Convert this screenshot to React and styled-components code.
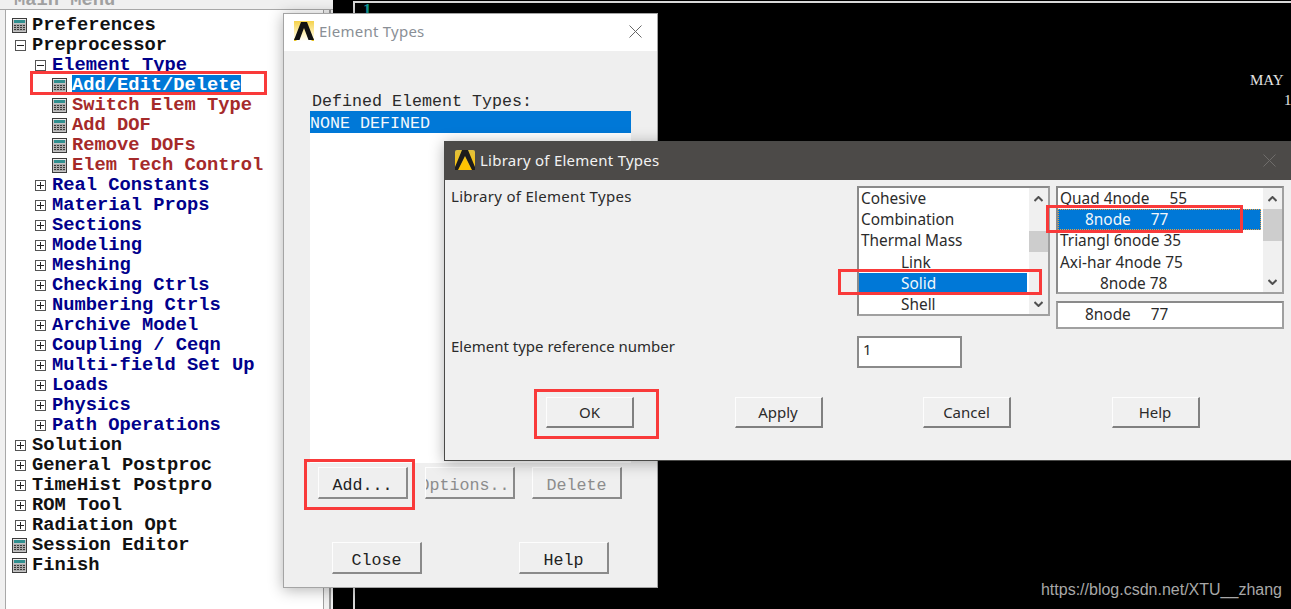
import React from "react";
import styled, { createGlobalStyle } from "styled-components";

const Global = createGlobalStyle`
  html, body { margin: 0; padding: 0; background: #000; }
`;

const MONO = `"Liberation Mono", "DejaVu Sans Mono", monospace`;
const UI = `"Noto Sans", "Open Sans", sans-serif`;

const Desktop = styled.div`
  position: relative;
  width: 1291px;
  height: 609px;
  overflow: hidden;
  display: flex;
  background: #000;
`;

const MenuPanel = styled.aside`
  width: 333px;
  height: 609px;
  flex: none;
  background: #f0f0f0;
  display: flex;
  flex-direction: column;
`;

const MenuCaption = styled.div`
  height: 9px;
  flex: none;
  overflow: hidden;
  padding-left: 14px;
  font: bold 18.75px/0 ${MONO};
  color: #a0a0a0;
  border-bottom: 1px solid #a8a8a8;
`;

const MenuBody = styled.div`
  flex: 1;
  display: flex;
  padding-left: 5px;
`;

const TreeBox = styled.div`
  width: 317px;
  flex: none;
  background: #fff;
  border-left: 1px solid #a8a8a8;
  border-right: 1px solid #a0a0a0;
  padding-top: 5px;
`;

const ScrollEdge = styled.div`
  width: 5px;
  flex: none;
  border-right: 2px solid #999;
`;

const TreeRow = styled.div`
  position: relative;
  height: 20px;
  display: flex;
  align-items: center;
  padding-left: ${(p) => 5 + p.$depth * 20}px;
  box-sizing: border-box;
`;

const TreeSlot = styled.span`
  width: 21px;
  height: 20px;
  flex: none;
  display: flex;
  align-items: center;
  padding-left: ${(p) => (p.$box ? 4 : 1)}px;
  box-sizing: border-box;
`;

const TreeLabel = styled.span`
  font: bold 18.75px/20px ${MONO};
  white-space: pre;
  color: ${(p) => p.$color};
  background: ${(p) => (p.$selected ? "#0078d7" : "transparent")};
  height: 20px;
`;

const GraphicsArea = styled.main`
  flex: 1;
  position: relative;
  padding: 1px 0 0 20px;
`;

const GraphicsFrame = styled.div`
  height: 100%;
  box-sizing: border-box;
  border-top: 2px solid #d8d8d8;
  border-left: 2px solid #d8d8d8;
  padding: 0 0 0 8px;
  display: flex;
  flex-direction: column;
`;

const AxisNumber = styled.div`
  font: bold 17px/14px "Liberation Serif", serif;
  color: #109a9a;
`;

const PlotNote = styled.div`
  position: absolute;
  font: 15px/16px "Liberation Serif", serif;
  color: #e4e4e4;
  left: ${(p) => p.$x}px;
  top: ${(p) => p.$y}px;
`;

const Window = styled.section`
  position: absolute;
  left: ${(p) => p.$x}px;
  top: ${(p) => p.$y}px;
  width: ${(p) => p.$w}px;
  height: ${(p) => p.$h}px;
  box-sizing: border-box;
  display: flex;
  flex-direction: column;
  background: #efefef;
  box-shadow: 0 2px 14px rgba(0, 0, 0, 0.3);
`;

const ElementWindow = styled(Window)`
  border: 1px solid #a4a4a4;
`;

const LibraryWindow = styled(Window)`
  border: 1px solid #4a4a48;
  border-right: 0;
`;

const TitleBar = styled.header`
  height: ${(p) => p.$h}px;
  box-sizing: border-box;
  flex: none;
  display: flex;
  align-items: center;
  gap: 5px;
  padding: 0 15px ${(p) => p.$lift}px 10px;
  background: ${(p) => p.$bg};
  color: ${(p) => p.$color};
  font: 15px/20px ${UI};
  letter-spacing: 0.25px;
`;

const TitleText = styled.span`
  flex: 1;
`;

const ElementBody = styled.div`
  flex: 1;
  padding: 42px 0 0 26px;
  display: flex;
  flex-direction: column;
`;

const DefinedLabel = styled.div`
  font: 16.67px/18px ${MONO};
  color: #2a2a2a;
  padding-left: 2px;
`;

const DefinedList = styled.div`
  width: 321px;
  height: 352px;
  flex: none;
  background: #fff;
`;

const DefinedItem = styled.div`
  height: 22px;
  background: #0078d7;
  color: #f4f8fc;
  font: 16.67px/26px ${MONO};
`;

const ActionRow = styled.div`
  display: flex;
  gap: 17px;
  margin: ${(p) => p.$top}px 0 0 ${(p) => p.$left}px;
`;

const CloseRow = styled(ActionRow)`
  gap: 97px;
`;

const BevelButton = styled.button`
  width: 90px;
  height: 32px;
  padding: 6px 0 0;
  box-sizing: border-box;
  display: flex;
  align-items: center;
  justify-content: center;
  overflow: hidden;
  white-space: pre;
  flex: none;
  background: #efefef;
  border-style: solid;
  border-width: 1px 2px 2px 1px;
  border-color: #fdfdfd #8a8a8a #8a8a8a #fdfdfd;
  color: ${(p) => (p.disabled ? "#8c8c8c" : "#222")};
  font: 16.67px/20px ${MONO};
`;

const LibraryBody = styled.div`
  flex: 1;
  display: flex;
  flex-direction: column;
  background: #f0f0f0;
  padding: 6px 0 0 6px;
`;

const LibraryGrid = styled.div`
  display: grid;
  grid-template-columns: 406px 199px 228px;
  grid-template-rows: 150px 32px;
  font: 15px/21px ${UI};
  color: #2b2b2b;
`;

const FieldLabel = styled.div`
  letter-spacing: ${(p) => p.$track}px;
`;

const ListBox = styled.div`
  width: ${(p) => p.$w}px;
  height: ${(p) => p.$h}px;
  box-sizing: border-box;
  border: 2px solid #8a8a8a;
  border-right-color: #a0a0a0;
  border-bottom-color: #a0a0a0;
  background: #fff;
  display: flex;
`;

const ListRows = styled.div`
  flex: 1;
  min-width: 0;
  overflow: hidden;
  padding-right: 2px;
  font-size: 15.4px;
`;

const ListRow = styled.div`
  height: 21.2px;
  box-sizing: border-box;
  white-space: pre;
  line-height: 21px;
  padding-left: ${(p) => p.$indent}px;
  background: ${(p) => (p.$selected ? "#0078d7" : "transparent")};
  color: ${(p) => (p.$selected ? "#f2f7fb" : "inherit")};
  outline: ${(p) => (p.$focus ? "1px dotted #e8a040" : "none")};
  outline-offset: -1px;
`;

const ScrollBar = styled.div`
  width: 19px;
  flex: none;
  background: #f0f0f0;
  display: flex;
  flex-direction: column;
  align-items: stretch;
`;

const ScrollArrow = styled.div`
  height: 21px;
  flex: none;
  display: flex;
  align-items: center;
  justify-content: center;
`;

const ScrollTrack = styled.div`
  flex: 1;
  padding-top: ${(p) => p.$offset}px;
`;

const ScrollThumb = styled.div`
  height: ${(p) => p.$h}px;
  background: #cdcdcd;
`;

const RightStack = styled.div`
  display: flex;
  flex-direction: column;
  gap: 7px;
`;

const ReadoutBox = styled.div`
  width: 228px;
  height: 28px;
  box-sizing: border-box;
  background: #fff;
  border: 2px solid #a0a0a0;
  border-top-color: #8a8a8a;
  padding-left: 27px;
  font-size: 15.4px;
  line-height: 23px;
  white-space: pre;
`;

const NumberBox = styled.div`
  width: 105px;
  height: 32px;
  box-sizing: border-box;
  background: #fff;
  border: 2px solid #8a8a8a;
  padding-left: 4px;
  line-height: 23px;
`;

const DialogButtons = styled.div`
  display: flex;
  gap: 100.5px;
  margin: 29px 0 0 95px;
`;

const DialogButton = styled.button`
  width: 88px;
  height: 31px;
  padding: 0 0 1px;
  box-sizing: border-box;
  flex: none;
  background: #f0f0f0;
  border-style: solid;
  border-width: 1px 2px 2px 1px;
  border-color: #fdfdfd #808080 #808080 #fdfdfd;
  color: #2b2b2b;
  font: 15px/20px ${UI};
`;

const Callout = styled.div`
  position: absolute;
  left: ${(p) => p.$x}px;
  top: ${(p) => p.$y}px;
  width: ${(p) => p.$w}px;
  height: ${(p) => p.$h}px;
  box-sizing: border-box;
  border: 3px solid #f93a3a;
  pointer-events: none;
`;

const Watermark = styled.div`
  position: absolute;
  right: 9px;
  bottom: 9px;
  font: 16px/20px "Liberation Sans", sans-serif;
  color: #a8a8a8;
`;

const CalcIcon = () => (
  <svg width="15" height="15" viewBox="0 0 15 15" style={{ display: "block" }}>
    <rect x="0.5" y="0.5" width="14" height="14" fill="#c4c4c4" stroke="#3c3c3c" />
    <rect x="1" y="1" width="13" height="1" fill="#eee" />
    <rect x="2" y="2" width="11" height="3" fill="#2f8f8f" />
    <rect x="2" y="6" width="11" height="7" fill="#a9a9a9" />
    {[3, 6, 9, 12].map((x) =>
      [7, 9, 11].map((y) => <rect key={`${x}-${y}`} x={x - 1} y={y} width="2" height="1" fill="#3a3a3a" />)
    )}
  </svg>
);

const BoxIcon = ({ open }) => (
  <svg width="11" height="11" viewBox="0 0 11 11" style={{ display: "block" }}>
    <rect x="0.5" y="0.5" width="10" height="10" fill="#fff" stroke="#555" />
    <rect x="2" y="5" width="7" height="1" fill="#222" />
    {!open && <rect x="5" y="2" width="1" height="7" fill="#222" />}
  </svg>
);

const CloseIcon = ({ color }) => (
  <svg width="13" height="13" viewBox="0 0 13 13" style={{ display: "block" }}>
    <path d="M0.5 0.5 L12.5 12.5 M12.5 0.5 L0.5 12.5" stroke={color} strokeWidth="1" fill="none" />
  </svg>
);

const LogoLight = () => (
  <svg width="20" height="20" viewBox="0 0 20 20" style={{ display: "block", flex: "none" }}>
    <defs>
      <linearGradient id="lg1" x1="0" y1="0" x2="0" y2="1">
        <stop offset="0" stopColor="#f5d24a" />
        <stop offset="0.7" stopColor="#fff5c8" />
        <stop offset="1" stopColor="#ffffff" />
      </linearGradient>
    </defs>
    <rect width="20" height="20" fill="url(#lg1)" />
    <path d="M0 20 L0 17 L3 20Z M20 20 L20 17 L17 20Z" fill="#e6c220" />
    <path d="M7 1 H13 L20 19 H14.5 L10 7 L5.5 19 H0 Z" fill="#111" />
  </svg>
);

const LogoDark = () => (
  <svg width="20" height="20" viewBox="0 0 20 20" style={{ display: "block", flex: "none" }}>
    <defs>
      <linearGradient id="lg2" x1="0" y1="0" x2="0" y2="1">
        <stop offset="0" stopColor="#e0c040" />
        <stop offset="1" stopColor="#ffc400" />
      </linearGradient>
    </defs>
    <rect width="20" height="20" rx="2" fill="url(#lg2)" />
    <path d="M7 0 H13 L20 17 V20 H17 L10 6 L3 20 H0 V17 Z" fill="#1d1d1b" />
    <path d="M10 8 L15.5 20 H4.5 Z" fill="#ffc400" />
  </svg>
);

const Chevron = ({ down }) => (
  <svg width="9" height="6" viewBox="0 0 9 6" style={{ display: "block" }}>
    <path d={down ? "M0.5 1 L4.5 5 L8.5 1" : "M0.5 5 L4.5 1 L8.5 5"} stroke="#505050" strokeWidth="2" fill="none" />
  </svg>
);

const ROOT = "#111";
const NAVY = "#00008b";
const BROWN = "#a52a2a";

const tree = [
  { t: "Preferences", d: 0, i: "calc", c: ROOT },
  { t: "Preprocessor", d: 0, i: "open", c: ROOT },
  { t: "Element Type", d: 1, i: "open", c: NAVY },
  { t: "Add/Edit/Delete", d: 2, i: "calc", c: "#fff", s: true },
  { t: "Switch Elem Type", d: 2, i: "calc", c: BROWN },
  { t: "Add DOF", d: 2, i: "calc", c: BROWN },
  { t: "Remove DOFs", d: 2, i: "calc", c: BROWN },
  { t: "Elem Tech Control", d: 2, i: "calc", c: BROWN },
  { t: "Real Constants", d: 1, i: "closed", c: NAVY },
  { t: "Material Props", d: 1, i: "closed", c: NAVY },
  { t: "Sections", d: 1, i: "closed", c: NAVY },
  { t: "Modeling", d: 1, i: "closed", c: NAVY },
  { t: "Meshing", d: 1, i: "closed", c: NAVY },
  { t: "Checking Ctrls", d: 1, i: "closed", c: NAVY },
  { t: "Numbering Ctrls", d: 1, i: "closed", c: NAVY },
  { t: "Archive Model", d: 1, i: "closed", c: NAVY },
  { t: "Coupling / Ceqn", d: 1, i: "closed", c: NAVY },
  { t: "Multi-field Set Up", d: 1, i: "closed", c: NAVY },
  { t: "Loads", d: 1, i: "closed", c: NAVY },
  { t: "Physics", d: 1, i: "closed", c: NAVY },
  { t: "Path Operations", d: 1, i: "closed", c: NAVY },
  { t: "Solution", d: 0, i: "closed", c: ROOT },
  { t: "General Postproc", d: 0, i: "closed", c: ROOT },
  { t: "TimeHist Postpro", d: 0, i: "closed", c: ROOT },
  { t: "ROM Tool", d: 0, i: "closed", c: ROOT },
  { t: "Radiation Opt", d: 0, i: "closed", c: ROOT },
  { t: "Session Editor", d: 0, i: "calc", c: ROOT },
  { t: "Finish", d: 0, i: "calc", c: ROOT },
];

const typeRows = [
  { t: "Cohesive", x: 2 },
  { t: "Combination", x: 2 },
  { t: "Thermal Mass", x: 2 },
  { t: "Link", x: 42 },
  { t: "Solid", x: 42, s: true },
  { t: "Shell", x: 42 },
];

const nodeRows = [
  { t: "Quad 4node     55", x: 2 },
  { t: "8node     77", x: 27, s: true, f: true },
  { t: "Triangl 6node 35", x: 2 },
  { t: "Axi-har 4node 75", x: 2 },
  { t: "8node 78", x: 42 },
];

const Scroller = ({ offset, thumb }) => (
  <ScrollBar>
    <ScrollArrow>
      <Chevron />
    </ScrollArrow>
    <ScrollTrack $offset={offset}>
      <ScrollThumb $h={thumb} />
    </ScrollTrack>
    <ScrollArrow>
      <Chevron down />
    </ScrollArrow>
  </ScrollBar>
);

export default function App() {
  return (
    <Desktop>
      <Global />
      <MenuPanel>
        <MenuCaption>Main Menu</MenuCaption>
        <MenuBody>
          <TreeBox>
            {tree.map((r) => (
              <TreeRow key={r.t} $depth={r.d}>
                <TreeSlot $box={r.i !== "calc"}>
                  {r.i === "calc" ? <CalcIcon /> : <BoxIcon open={r.i === "open"} />}
                </TreeSlot>
                <TreeLabel $color={r.c} $selected={r.s}>
                  {r.t}
                </TreeLabel>
              </TreeRow>
            ))}
          </TreeBox>
          <ScrollEdge />
        </MenuBody>
      </MenuPanel>

      <GraphicsArea>
        <GraphicsFrame>
          <AxisNumber>1</AxisNumber>
        </GraphicsFrame>
        <PlotNote $x={917} $y={72}>
          MAY
        </PlotNote>
        <PlotNote $x={951} $y={92}>
          1
        </PlotNote>
      </GraphicsArea>

      <ElementWindow $x={283} $y={13} $w={375} $h={575}>
        <TitleBar $h={37} $lift={3} $bg="#fff" $color="#8a8f96">
          <LogoLight />
          <TitleText>Element Types</TitleText>
          <CloseIcon color="#666" />
        </TitleBar>
        <ElementBody>
          <DefinedLabel>Defined Element Types:</DefinedLabel>
          <DefinedList>
            <DefinedItem>NONE DEFINED</DefinedItem>
          </DefinedList>
          <ActionRow $top={4} $left={8}>
            <BevelButton>Add...</BevelButton>
            <BevelButton disabled>Options...</BevelButton>
            <BevelButton disabled>Delete</BevelButton>
          </ActionRow>
          <CloseRow $top={43} $left={22}>
            <BevelButton>Close</BevelButton>
            <BevelButton>Help</BevelButton>
          </CloseRow>
        </ElementBody>
      </ElementWindow>

      <LibraryWindow $x={444} $y={141} $w={847} $h={320}>
        <TitleBar $h={38} $lift={2} $bg="#4c4a48" $color="#f2f2f2">
          <LogoDark />
          <TitleText>Library of Element Types</TitleText>
          <CloseIcon color="#6f6d6b" />
        </TitleBar>
        <LibraryBody>
          <LibraryGrid>
            <FieldLabel $track={0.3}>Library of Element Types</FieldLabel>
            <ListBox $w={193} $h={130}>
              <ListRows>
                {typeRows.map((r) => (
                  <ListRow key={r.t} $indent={r.x} $selected={r.s}>
                    {r.t}
                  </ListRow>
                ))}
              </ListRows>
              <Scroller offset={22} thumb={21} />
            </ListBox>
            <RightStack>
              <ListBox $w={228} $h={108}>
                <ListRows>
                  {nodeRows.map((r) => (
                    <ListRow key={r.t} $indent={r.x} $selected={r.s} $focus={r.f}>
                      {r.t}
                    </ListRow>
                  ))}
                </ListRows>
                <Scroller offset={0} thumb={32} />
              </ListBox>
              <ReadoutBox>8node     77</ReadoutBox>
            </RightStack>
            <FieldLabel $track={0}>Element type reference number</FieldLabel>
            <NumberBox>1</NumberBox>
          </LibraryGrid>
          <DialogButtons>
            <DialogButton>OK</DialogButton>
            <DialogButton>Apply</DialogButton>
            <DialogButton>Cancel</DialogButton>
            <DialogButton>Help</DialogButton>
          </DialogButtons>
        </LibraryBody>
      </LibraryWindow>

      <Callout $x={30} $y={71} $w={237} $h={24} />
      <Callout $x={304} $y={459} $w={111} $h={51} />
      <Callout $x={534} $y={389} $w={125} $h={50} />
      <Callout $x={838} $y={269} $w={204} $h={26} />
      <Callout $x={1046} $y={205} $w={197} $h={28} />
      <Watermark>https://blog.csdn.net/XTU__zhang</Watermark>
    </Desktop>
  );
}
